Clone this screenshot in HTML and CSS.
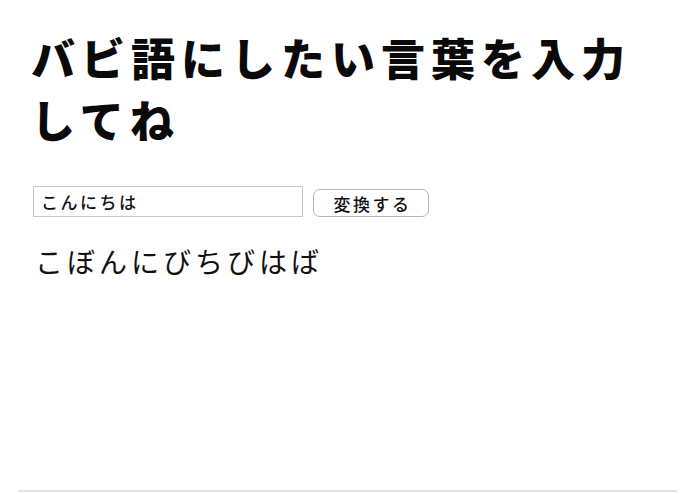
FILE: index.html
```html
<!DOCTYPE html>
<html lang="ja">
<head>
<meta charset="utf-8">
<link rel="stylesheet" href="styles.css">
</head>
<body>
<div class="page">
  <main class="content">
    <h1 class="title">バビ語にしたい言葉を入力してね</h1>
    <form class="form">
      <input class="field" type="text" value="こんにちは">
      <button class="btn" type="button">変換する</button>
    </form>
    <p class="result">こぼんにびちびはば</p>
  </main>
  <hr class="rule">
</div>
</body>
</html>
```
FILE: styles.css
```css
html, body {
  margin: 0;
  padding: 0;
  background: #ffffff;
}
body {
  font-family: "Noto Sans CJK JP", "Noto Sans", sans-serif;
  color: #111;
}
.page {
  width: 695px;
  height: 494px;
  display: flex;
  flex-direction: column;
}
.content {
  flex: 1;
  padding: 26px 0 0 31px;
}
.title {
  margin: 0;
  width: 640px;
  font-size: 44px;
  font-weight: 900;
  line-height: 62px;
  letter-spacing: 6px;
  color: #0a0a0a;
}
.form {
  margin: 36px 0 0 2px;
  display: flex;
  align-items: flex-end;
  gap: 10px;
}
.field {
  box-sizing: border-box;
  width: 270px;
  height: 31px;
  margin: 0;
  border: 1px solid #c8c8c8;
  padding: 0 0 0 7px;
  font-family: "Noto Sans CJK JP", sans-serif;
  font-size: 17px;
  font-weight: 500;
  letter-spacing: 2.5px;
  color: #111;
  outline: none;
}
.btn {
  box-sizing: border-box;
  width: 116px;
  height: 28px;
  margin: 0;
  border: 1px solid #b5b5b5;
  border-radius: 7px;
  background: #fff;
  padding: 0 0 0 3px;
  font-family: "Noto Sans CJK JP", sans-serif;
  font-size: 17px;
  font-weight: 500;
  letter-spacing: 2.5px;
  color: #111;
}
.result {
  margin: 27px 0 0 4px;
  font-size: 28px;
  line-height: 34px;
  letter-spacing: 4px;
  color: #111;
}
.rule {
  margin: 0 18px 2px 18px;
  border: 0;
  height: 2px;
  background: #e4e4e4;
}
```
